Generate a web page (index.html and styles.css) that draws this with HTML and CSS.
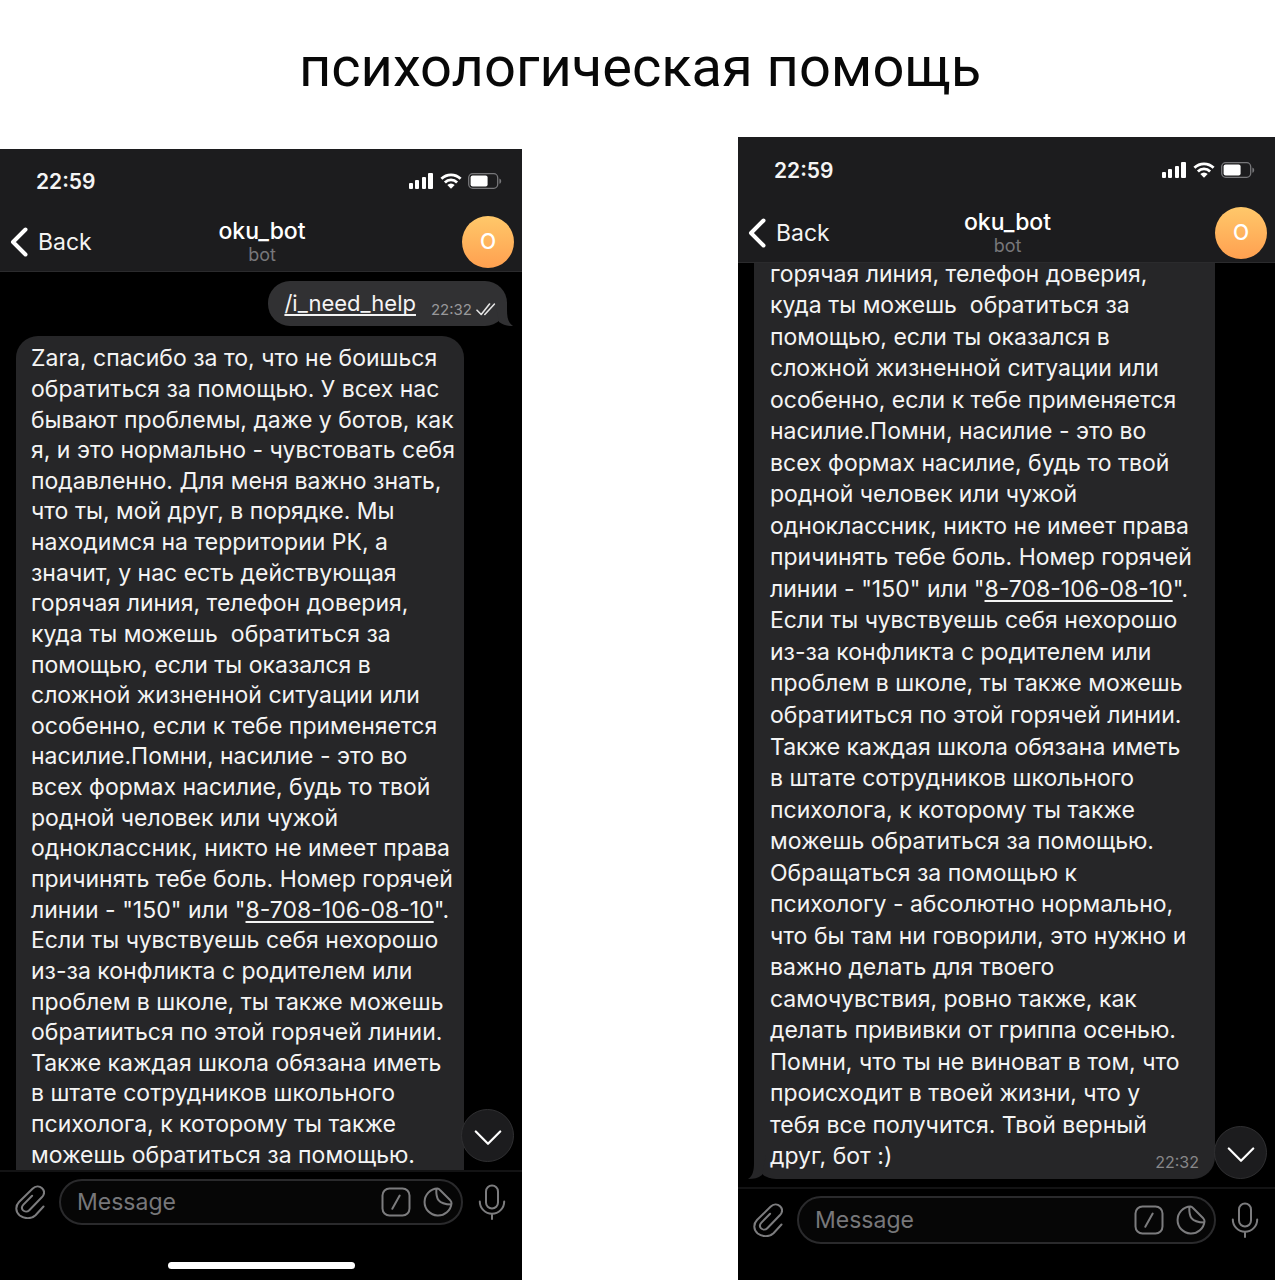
FILE: index.html
```html
<!DOCTYPE html>
<html lang="ru">
<head>
<meta charset="utf-8">
<meta name="viewport" content="width=device-width, initial-scale=1">
<title>психологическая помощь</title>
<link rel="stylesheet" href="styles.css">
</head>
<body>
<svg class="sprite" aria-hidden="true">
  <symbol id="signal" viewBox="0 0 26 16"><g fill="#fff"><rect x="1" y="10" width="4" height="6" rx="1"/><rect x="7" y="7" width="4" height="9" rx="1"/><rect x="14" y="4" width="4" height="12" rx="1"/><rect x="20" y="0" width="5" height="16" rx="1"/></g></symbol>
  <symbol id="wifi" viewBox="0 0 22 16"><g fill="none" stroke="#fff" stroke-width="2.8"><path d="M1.4 5.8a13.6 13.6 0 0 1 19.2 0"/><path d="M4.9 9.4a8.6 8.6 0 0 1 12.2 0"/></g><path d="M7.3 12a5.2 5.2 0 0 1 7.4 0L11 15.8z" fill="#fff"/></symbol>
  <symbol id="battery" viewBox="0 0 34 16"><rect x=".7" y=".7" width="29" height="14.6" rx="4" fill="none" stroke="#77777a" stroke-width="1.3"/><rect x="2.6" y="2.6" width="17" height="10.8" rx="2" fill="#fff"/><path d="M31.4 5.4c2.4.8 2.4 4.6 0 5.4z" fill="#77777a"/></symbol>
  <symbol id="chevron" viewBox="0 0 18 30"><path d="M15.5 2.5 3 15l12.500 12.500" fill="none" stroke="#fff" stroke-width="4" stroke-linecap="round" stroke-linejoin="round"/></symbol>
  <symbol id="down" viewBox="0 0 28 16"><path d="M1.800 1.500 14 13.800 26.200 1.500" fill="none" stroke="#fff" stroke-width="2.200" stroke-linecap="round" stroke-linejoin="round"/></symbol>
  <symbol id="checks" viewBox="0 0 20 13"><path d="M1 7.200 5.200 11.500 13.500 1M8.800 11.500 18.500 1" fill="none" stroke="#e4e4e4" stroke-width="1.600" stroke-linecap="round" stroke-linejoin="round"/></symbol>
  <symbol id="clip" viewBox="0 0 30 34"><path d="M28.500 21.500 20.500 30.200C16.500 34.200 9.500 34 4.700 30.500 .2 26.500 .4 20.800 4 17L17.500 3.700c3-2.900 7-2.900 9.600-.5 2.500 2.500 2.500 6-.3 9.100L14.300 25.200c-1.800 1.800-4.600 1.800-6.200.2-1.500-1.600-1.400-4 .3-5.800l8.700-8.800" fill="none" stroke="#7c7c7e" stroke-width="2" stroke-linecap="round" stroke-linejoin="round"/></symbol>
  <symbol id="slash" viewBox="0 0 30 30"><rect x="1.500" y="1.500" width="27" height="27" rx="7" fill="none" stroke="#7c7c7e" stroke-width="2"/><path d="M18.700 8.500 11.300 21.800" stroke="#7c7c7e" stroke-width="2" stroke-linecap="round"/></symbol>
  <symbol id="sticker" viewBox="0 0 30 30"><path d="M14.500 1.500A13.500 13.500 0 1 0 28.500 16.300C28.600 14.700 28 14.100 27 13L17 3C16.200 2.100 15.500 1.500 14.500 1.500ZM13.300 2C13 11.500 14.500 17 28.300 17.600" fill="none" stroke="#7c7c7e" stroke-width="2" stroke-linejoin="round"/></symbol>
  <symbol id="mic" viewBox="0 0 28 36"><g fill="none" stroke="#7c7c7e" stroke-width="2" stroke-linecap="round"><rect x="8" y="1.500" width="12" height="23" rx="6"/><path d="M1.800 17.500a12.200 12.200 0 0 0 24.400 0M14 30v5"/></g></symbol>
  <symbol id="tail" viewBox="0 0 24 24"><path d="M6 0h12v8c0 7 1 13 6 16-6 0-10-1-14-4z" fill="currentColor"/></symbol>
</svg>

<h1 class="title">психологическая помощь</h1>

<main class="phones">
  <section class="phone phone-start">
    <header class="top">
      <div class="status">
        <time>22:59</time>
        <div class="status-icons">
          <svg class="i-signal"><use href="#signal"/></svg>
          <svg class="i-wifi"><use href="#wifi"/></svg>
          <svg class="i-battery"><use href="#battery"/></svg>
        </div>
      </div>
      <nav class="nav">
        <button class="back" type="button"><svg class="i-chevron"><use href="#chevron"/></svg>Back</button>
        <div class="peer"><h2>oku_bot</h2><p>bot</p></div>
        <div class="avatar">O</div>
      </nav>
    </header>
    <div class="chat">
      <div class="sent">
        <a href="#help">/i_need_help</a>
        <time>22:32</time>
        <svg class="i-checks"><use href="#checks"/></svg>
        <svg class="tail"><use href="#tail"/></svg>
      </div>
      <p class="received">
        <span>Zara, спасибо за то, что не боишься</span>
        <span>обратиться за помощью. У всех нас</span>
        <span>бывают проблемы, даже у ботов, как</span>
        <span>я, и это нормально - чувстовать себя</span>
        <span>подавленно. Для меня важно знать,</span>
        <span>что ты, мой друг, в порядке. Мы</span>
        <span>находимся на территории РК, а</span>
        <span>значит, у нас есть действующая</span>
        <span>горячая линия, телефон доверия,</span>
        <span>куда ты можешь&nbsp; обратиться за</span>
        <span>помощью, если ты оказался в</span>
        <span>сложной жизненной ситуации или</span>
        <span>особенно, если к тебе применяется</span>
        <span>насилие.Помни, насилие - это во</span>
        <span>всех формах насилие, будь то твой</span>
        <span>родной человек или чужой</span>
        <span>одноклассник, никто не имеет права</span>
        <span>причинять тебе боль. Номер горячей</span>
        <span>линии - "150" или "<a href="tel:87081060810">8-708-106-08-10</a>".</span>
        <span>Если ты чувствуешь себя нехорошо</span>
        <span>из-за конфликта с родителем или</span>
        <span>проблем в школе, ты также можешь</span>
        <span>обратииться по этой горячей линии.</span>
        <span>Также каждая школа обязана иметь</span>
        <span>в штате сотрудников школьного</span>
        <span>психолога, к которому ты также</span>
        <span>можешь обратиться за помощью.</span>
      </p>
      <button class="jump" type="button" aria-label="Scroll down"><svg class="i-down"><use href="#down"/></svg></button>
    </div>
    <form class="composer">
      <button type="button" aria-label="Attach"><svg class="i-clip"><use href="#clip"/></svg></button>
      <div class="field">
        <input type="text" placeholder="Message" aria-label="Message">
        <button type="button" aria-label="Commands"><svg class="i-square"><use href="#slash"/></svg></button>
        <button type="button" aria-label="Stickers"><svg class="i-square"><use href="#sticker"/></svg></button>
      </div>
      <button type="button" aria-label="Record"><svg class="i-mic"><use href="#mic"/></svg></button>
    </form>
    <div class="home"></div>
  </section>

  <section class="phone phone-end">
    <header class="top">
      <div class="status">
        <time>22:59</time>
        <div class="status-icons">
          <svg class="i-signal"><use href="#signal"/></svg>
          <svg class="i-wifi"><use href="#wifi"/></svg>
          <svg class="i-battery"><use href="#battery"/></svg>
        </div>
      </div>
      <nav class="nav">
        <button class="back" type="button"><svg class="i-chevron"><use href="#chevron"/></svg>Back</button>
        <div class="peer"><h2>oku_bot</h2><p>bot</p></div>
        <div class="avatar">O</div>
      </nav>
    </header>
    <div class="chat">
      <p class="received">
        <span>горячая линия, телефон доверия,</span>
        <span>куда ты можешь&nbsp; обратиться за</span>
        <span>помощью, если ты оказался в</span>
        <span>сложной жизненной ситуации или</span>
        <span>особенно, если к тебе применяется</span>
        <span>насилие.Помни, насилие - это во</span>
        <span>всех формах насилие, будь то твой</span>
        <span>родной человек или чужой</span>
        <span>одноклассник, никто не имеет права</span>
        <span>причинять тебе боль. Номер горячей</span>
        <span>линии - "150" или "<a href="tel:87081060810">8-708-106-08-10</a>".</span>
        <span>Если ты чувствуешь себя нехорошо</span>
        <span>из-за конфликта с родителем или</span>
        <span>проблем в школе, ты также можешь</span>
        <span>обратииться по этой горячей линии.</span>
        <span>Также каждая школа обязана иметь</span>
        <span>в штате сотрудников школьного</span>
        <span>психолога, к которому ты также</span>
        <span>можешь обратиться за помощью.</span>
        <span>Обращаться за помощью к</span>
        <span>психологу - абсолютно нормально,</span>
        <span>что бы там ни говорили, это нужно и</span>
        <span>важно делать для твоего</span>
        <span>самочувствия, ровно также, как</span>
        <span>делать прививки от гриппа осенью.</span>
        <span>Помни, что ты не виноват в том, что</span>
        <span>происходит в твоей жизни, что у</span>
        <span>тебя все получится. Твой верный</span>
        <span class="last">друг, бот :) <time>22:32</time></span>
        <svg class="tail"><use href="#tail"/></svg>
      </p>
      <button class="jump" type="button" aria-label="Scroll down"><svg class="i-down"><use href="#down"/></svg></button>
    </div>
    <form class="composer">
      <button type="button" aria-label="Attach"><svg class="i-clip"><use href="#clip"/></svg></button>
      <div class="field">
        <input type="text" placeholder="Message" aria-label="Message">
        <button type="button" aria-label="Commands"><svg class="i-square"><use href="#slash"/></svg></button>
        <button type="button" aria-label="Stickers"><svg class="i-square"><use href="#sticker"/></svg></button>
      </div>
      <button type="button" aria-label="Record"><svg class="i-mic"><use href="#mic"/></svg></button>
    </form>
  </section>
</main>
</body>
</html>
```
FILE: styles.css
```css
* { box-sizing: border-box; margin: 0; padding: 0; }
body {
  min-height: 100vh;
  display: flex;
  flex-direction: column;
  background: #fff;
  font-family: Inter, "Noto Sans", sans-serif;
  color: #f4f4f4;
}
svg { display: block; flex: none; }
button { border: 0; background: none; color: inherit; font: inherit; flex: none; cursor: pointer; }
a { color: inherit; text-underline-offset: 3px; text-decoration-thickness: 2px; text-decoration-skip-ink: none; }
.sprite { position: absolute; width: 0; height: 0; }

.title {
  height: 137px;
  color: #080808;
  font: 400 56px/134px Roboto, sans-serif;
  text-align: center;
}
.phones {
  flex: 1;
  display: grid;
  grid-template-columns: 522fr 537fr;
  column-gap: 216px;
  padding-right: 5px;
}
.phone { display: flex; flex-direction: column; background: #000; min-width: 0; font-size: 23px; }
.phone-start { margin-top: 12px; }

.top { background: #1c1c1e; border-bottom: 1px solid #2b2b2d; }
.status { display: flex; justify-content: space-between; align-items: center; height: 64px; padding: 0 20px 0 36px; font-size: 21px; font-weight: 600; }
.status-icons { display: flex; align-items: center; gap: 6px; }
.i-signal { width: 26px; height: 16px; }
.i-wifi { width: 22px; height: 16px; }
.i-battery { width: 34px; height: 16px; }
.nav { display: grid; grid-template-columns: 1fr auto 1fr; align-items: center; height: 58px; padding: 0 8px 0 10px; }
.back { display: flex; align-items: center; gap: 10px; justify-self: start; font-size: 23px; line-height: 30px; }
.i-chevron { width: 18px; height: 30px; }
.peer { text-align: center; }
.peer h2 { font-size: 23px; font-weight: 500; line-height: 26px; color: #fff; }
.peer p { font-size: 18px; line-height: 22px; color: #77777a; }
.avatar {
  justify-self: end;
  width: 52px; height: 52px;
  border-radius: 50%;
  background: linear-gradient(#ffc86a, #ffa050);
  color: #fff;
  font-size: 21px; font-weight: 500; line-height: 52px;
  text-align: center;
}

.chat { position: relative; flex: 1; display: flex; flex-direction: column; overflow: hidden; }
.sent {
  position: relative;
  align-self: flex-end;
  display: flex;
  align-items: center;
  height: 45px;
  margin: 9px 15px 10px 0;
  padding: 0 11px 2px 16px;
  border-radius: 22px;
  background: #313133;
  font-size: 22px;
}
.sent time { margin: 14px 4px 0 15px; font-size: 15px; color: #98989a; }
.i-checks { width: 20px; height: 13px; margin-top: 14px; }
.tail { position: absolute; width: 24px; height: 24px; }
.sent .tail { right: -6px; bottom: 0; color: #313133; }
.received {
  position: relative;
  flex: 1;
  display: grid;
  grid-auto-rows: 1fr;
  align-items: center;
  width: 448px;
  margin-left: 16px;
  padding: 7px 0 0 15px;
  border-radius: 22px 22px 0 0;
  background: #262628;
  white-space: nowrap;
  line-height: 28px;
}
.phone-end .received { width: 461px; margin: -5px 0 8px 16px; padding: 0 16px 7px 16px; border-radius: 0 0 22px 22px; }
.received .tail { left: -6px; bottom: 0; color: #262628; transform: scaleX(-1); }
.last { display: flex; justify-content: space-between; align-items: flex-end; }
.last time { font-size: 16px; line-height: 16px; color: #88888a; }
.jump {
  position: absolute;
  right: 8px; bottom: 8px;
  width: 53px; height: 53px;
  display: grid;
  place-items: center;
  border: 1px solid #303032;
  border-radius: 50%;
  background: #1c1c1e;
}
.i-down { width: 28px; height: 16px; margin-top: 4px; }

.composer { display: flex; align-items: center; justify-content: space-between; height: 62px; padding: 0 16px 0 15px; border-top: 2px solid #131314; }
.composer svg { margin: auto; }
.i-clip { width: 30px; height: 34px; }
.i-mic { width: 28px; height: 36px; }
.i-square { width: 30px; height: 30px; }
.field { flex: 1; min-width: 0; display: flex; align-items: center; gap: 12px; height: 46px; margin: 0 15px 0 14px; padding: 0 8px 0 16px; border: 2px solid #2a2a2c; border-radius: 23px; background: #060606; }
.field input { flex: 1; min-width: 0; border: 0; outline: 0; background: none; color: #fff; font: 400 23px/28px Inter, sans-serif; }
.field input::placeholder { color: #77777a; opacity: 1; }
.home { align-self: center; width: 187px; height: 7px; margin: 30px 0 11px; border-radius: 4px; background: #fff; }

.phone-end .status { height: 66px; }
.phone-end .nav { height: 59px; }
.phone-end .composer { height: 64px; margin-bottom: 29px; }
.phone-end .field { height: 48px; border-radius: 24px; }
```
